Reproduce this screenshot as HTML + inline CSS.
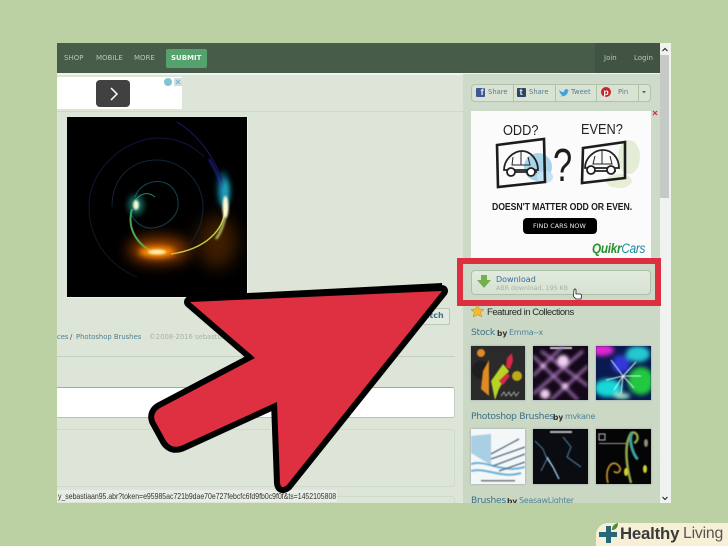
<!DOCTYPE html>
<html><head><meta charset="utf-8">
<style>
html,body{margin:0;padding:0}
body{width:728px;height:546px;overflow:hidden;position:relative;background:#bbd1a3;font-family:"Liberation Sans","DejaVu Sans",sans-serif}
div,span,a{position:absolute;white-space:nowrap}
.v{font-family:"DejaVu Sans",sans-serif}
.n{top:54px;font-size:7px;color:#b7c5b4;font-family:"DejaVu Sans",sans-serif}
.s{top:88px;font-size:6.8px;color:#557f8c;font-family:"DejaVu Sans",sans-serif}
.h{font-size:9.200px;letter-spacing:-.3px;color:#3d7088;font-family:"DejaVu Sans",sans-serif}
.b{font-size:7.5px;color:#333;font-weight:bold;font-family:"DejaVu Sans",sans-serif}
.u{font-size:8px;letter-spacing:-.3px;color:#4f8494;font-family:"DejaVu Sans",sans-serif}
.t{overflow:hidden;box-shadow:0 0 2px #99a;background:#000}
.t svg{filter:blur(.4px);display:block}
</style></head><body>
<div style="left:57px;top:43px;width:614px;height:460px;background:#dce5d7;overflow:hidden"></div>
<!-- nav -->
<div style="left:57px;top:43px;width:603px;height:30px;background:#475c49"></div>
<div style="left:595px;top:43px;width:65px;height:30px;background:#415443"></div>
<div style="left:57px;top:73px;width:603px;height:1.500px;background:#f0f4ee"></div>
<span class="n" style="left:64px">SHOP</span>
<span class="n" style="left:96px">MOBILE</span>
<span class="n" style="left:134px">MORE</span>
<div style="left:166px;top:49px;width:41px;height:19px;background:#55a26e;border-radius:2px"></div>
<span class="v" style="left:171px;top:54px;font-size:7px;font-weight:bold;color:#f2f7f0">SUBMIT</span>
<span class="n" style="left:604px">Join</span>
<span class="n" style="left:634px">Login</span>
<!-- top ad -->
<div style="left:57px;top:77px;width:125px;height:32px;background:#fff"></div>
<div style="left:96px;top:80px;width:34px;height:27px;background:#414141;border-radius:4px"></div>
<svg style="position:absolute;left:96px;top:80px" width="34" height="27"><path d="M15 8l6 6-6 6" fill="none" stroke="#fff" stroke-width="1.500"/></svg>
<div style="left:164px;top:78px;width:8px;height:8px;background:#7cc6d8;border-radius:4px"></div>
<div style="left:174px;top:78px;width:8px;height:8px;background:#cfdfe6"></div>
<svg style="position:absolute;left:174px;top:78px" width="8" height="8"><path d="M2 2l4 4M6 2L2 6" stroke="#6fb8cc" stroke-width="1"/></svg>
<div style="left:57px;top:111px;width:406px;height:1px;background:#cfd9ca"></div>
<!-- main image -->
<div style="left:67px;top:117px;width:181px;height:181px;background:#eef2ec"></div>
<svg style="position:absolute;left:67px;top:117px" width="180" height="180" viewBox="0 0 180 180">
<defs>
<filter id="b1" x="-100%" y="-100%" width="300%" height="300%"><feGaussianBlur stdDeviation="1"/></filter>
<filter id="b3" x="-100%" y="-100%" width="300%" height="300%"><feGaussianBlur stdDeviation="3"/></filter>
<filter id="b8" x="-100%" y="-100%" width="300%" height="300%"><feGaussianBlur stdDeviation="8"/></filter>
</defs>
<rect width="180" height="180" fill="#000"/>
<ellipse cx="150" cy="125" rx="20" ry="26" fill="#7a3a00" opacity=".5" filter="url(#b8)"/>
<ellipse cx="92" cy="133" rx="30" ry="11" fill="#c45200" opacity=".95" filter="url(#b8)"/>
<ellipse cx="156" cy="72" rx="6" ry="18" fill="#0f6f98" opacity=".7" filter="url(#b3)"/>
<g fill="none">
<path d="M110 5C135 20 155 50 159 82" stroke="#1c1660" stroke-width="1.100"/>
<path d="M142 42C150 55 157 72 159 85" stroke="#1c2890" stroke-width="2" filter="url(#b1)"/>
<path d="M22 90C22 50 60 21 92 21C112 21 128 30 137 40" stroke="#141440" stroke-width="1"/>
<path d="M22 90C22 125 45 150 70 160" stroke="#101a20" stroke-width="1"/>
<path d="M45 90C45 60 65 43 90 43C115 43 136 65 136 90C136 105 130 118 122 128" stroke="#102638" stroke-width="1"/>
<path d="M68 80C72 68 85 63 95 65C108 68 112 80 111 90C109 102 95 112 82 111C72 110 66 102 63 95" stroke="#124650" stroke-width="1"/>
<path d="M68 84C72 78 80 73 88 80" stroke="#2f7f6a" stroke-width="1"/>
<path d="M65 92C60 110 68 126 86 135" stroke="#4aa850" stroke-width="2"/>
<path d="M158 92C157 112 140 132 104 137" stroke="#c0ce50" stroke-width="1.500"/>
<path d="M159 88C159 100 156 112 149 122" stroke="#dfe87a" stroke-width="2" filter="url(#b1)"/>
</g>
<ellipse cx="90" cy="135" rx="18" ry="5.500" fill="#ff8f00" filter="url(#b3)"/>
<ellipse cx="90" cy="135" rx="9" ry="2.500" fill="#fff0b0" filter="url(#b1)"/>
<ellipse cx="158" cy="75" rx="4" ry="13" fill="#28c0d0" opacity=".9" filter="url(#b3)"/>
<ellipse cx="158.500" cy="90" rx="3" ry="11" fill="#fffbd8" filter="url(#b1)"/>
<ellipse cx="69" cy="88" rx="8" ry="10" fill="#1a9a8a" opacity=".65" filter="url(#b3)"/>
<ellipse cx="69" cy="88" rx="3" ry="5" fill="#f4ffd8" filter="url(#b1)"/>
</svg>
<!-- lower left -->
<span class="v" style="left:57px;top:333px;font-size:6.800px;color:#4f7f8f">ces</span>
<span class="v" style="left:70px;top:333px;font-size:6.800px;color:#444">/</span>
<span class="v" style="left:76px;top:333px;font-size:6.800px;color:#4f7f8f">Photoshop Brushes</span>
<span class="v" style="left:149px;top:333px;font-size:6.800px;color:#a9b4a6">©2008-2016 sebastiaan95</span>
<div style="left:400px;top:308px;width:48px;height:15px;border:1px solid #bcc8b8;border-radius:2px;background:#e2e9de"></div>
<span class="v" style="left:424px;top:311px;font-size:8px;font-weight:bold;color:#3d7088">atch</span>
<div style="left:57px;top:356px;width:398px;height:1px;background:#c4cfbf"></div>
<div style="left:57px;top:387px;width:397px;height:29px;background:#fff;border-top:1.500px solid #a0aa9d;border-bottom:1px solid #b9c3b5;border-right:1px solid #c5cdc2;border-radius:0 3px 3px 0"></div>
<div style="left:57px;top:429px;width:397px;height:56px;border:1px solid #d0dacb;border-left:0;border-radius:0 3px 3px 0"></div>
<div style="left:57px;top:496px;width:397px;height:7px;border:1px solid #d0dacb;border-left:0;border-bottom:0;border-radius:0 3px 0 0"></div>
<!-- sidebar -->
<div style="left:463px;top:74px;width:197px;height:429px;background:linear-gradient(180deg,#cfdbca 0,#c9d7c3 100%)"></div>
<div style="left:660px;top:43px;width:11px;height:460px;background:#f0f2ef"></div>
<div style="left:660px;top:55px;width:9px;height:143px;background:#c6cac6"></div>
<svg style="position:absolute;left:660px;top:43px" width="11" height="460"><path d="M2.500 8l2.500-2.500L7.500 8M2.500 454l2.500 2.500L7.500 454" fill="none" stroke="#222" stroke-width="1.100"/></svg>
<!-- share bar -->
<div style="left:471px;top:84px;width:178px;height:16px;border:1px solid #b2c0ac;border-radius:4px;background:#d9e3d4"></div>
<div style="left:513px;top:85px;width:1px;height:16px;background:#b2c0ac"></div>
<div style="left:555px;top:85px;width:1px;height:16px;background:#b2c0ac"></div>
<div style="left:596px;top:85px;width:1px;height:16px;background:#b2c0ac"></div>
<div style="left:638px;top:85px;width:1px;height:16px;background:#b2c0ac"></div>
<div style="left:476px;top:88px;width:9px;height:9px;background:#3b5998;border-radius:1px"></div>
<span style="left:480.500px;top:87px;font-size:9.500px;font-weight:bold;color:#dfe6f2">f</span>
<span class="s" style="left:488px">Share</span>
<div style="left:517px;top:88px;width:9px;height:9px;background:#2c4762;border-radius:1px"></div>
<span style="left:519.500px;top:87px;font-size:9.500px;font-weight:bold;color:#dfe6f2">t</span>
<span class="s" style="left:529px">Share</span>
<svg style="position:absolute;left:559px;top:88px" width="10" height="9"><path d="M0 2C2 4 4 4 5 4C5 1 8 0 9 2L10 2L9 3C9 7 5 9 1 8C3 8 3 7 4 7C2 7 1 5 1 5C1 4 0 3 0 2Z" fill="#3fa3dc"/></svg>
<span class="s" style="left:571px">Tweet</span>
<div style="left:601px;top:87px;width:10px;height:10px;border-radius:5px;background:#c8232c"></div>
<span style="left:603.500px;top:87px;font-size:8.500px;font-weight:bold;color:#fff">p</span>
<span class="s" style="left:618px">Pin</span>
<svg style="position:absolute;left:641px;top:90px" width="7" height="5"><path d="M1 1h4L3 3.500Z" fill="#667"/></svg>
<!-- ad -->
<div style="left:471px;top:111px;width:180px;height:150px;background:#fbfbfb"></div>
<svg style="position:absolute;left:652px;top:110px" width="7" height="7"><path d="M1 1l4 4M5 1l-4 4" stroke="#c8323c" stroke-width="1.200"/></svg>
<span style="left:503px;top:122px;font-size:15px;color:#222;transform:scaleX(.85);transform-origin:0 0">ODD?</span>
<span style="left:581px;top:121px;font-size:15px;color:#222;transform:scaleX(.85);transform-origin:0 0">EVEN?</span>
<svg style="position:absolute;left:495px;top:135px" width="150" height="60" viewBox="0 0 150 60">
<ellipse cx="43" cy="32" rx="14" ry="14" fill="#a8d4ea"/>
<ellipse cx="50" cy="42" rx="8" ry="6" fill="#c4e2f0"/>
<ellipse cx="134" cy="22" rx="11" ry="17" fill="#e3edd6"/>
<ellipse cx="124" cy="46" rx="13" ry="7" fill="#e7eed6"/>
<path d="M2 10L49 4L50 47L3 52Z" fill="none" stroke="#1c1c1c" stroke-width="2.600"/>
<path d="M88 13L130 7L130 43L87 48Z" fill="none" stroke="#1c1c1c" stroke-width="2.600"/>
<path d="M9 35C9 25 18 16 27 16C36 16 43 25 43 35Z M12 37H42" fill="none" stroke="#222" stroke-width="1.800"/>
<circle cx="16" cy="37" r="4" fill="#fff" stroke="#222" stroke-width="1.800"/><circle cx="36" cy="37" r="4" fill="#fff" stroke="#222" stroke-width="1.800"/>
<path d="M26 17v13M18 22l-1 8h18l-2-8" fill="none" stroke="#222" stroke-width="1"/>
<path d="M90 33C90 23 99 15 108 15C117 15 124 23 124 33Z M93 36H121" fill="none" stroke="#222" stroke-width="1.800"/>
<circle cx="96" cy="35" r="4" fill="#fff" stroke="#222" stroke-width="1.800"/><circle cx="116" cy="35" r="4" fill="#fff" stroke="#222" stroke-width="1.800"/>
<path d="M107 16v13M100 21l-2 8h19l-2-8" fill="none" stroke="#222" stroke-width="1"/>
</svg>
<span style="left:553px;top:138px;font-size:46px;color:#1c1c1c;transform:scaleX(.75);transform-origin:0 0">?</span>
<span style="left:492px;top:201px;font-size:10.500px;font-weight:bold;color:#1d1d1d;letter-spacing:-.1px;transform:scaleX(.83);transform-origin:0 0">DOESN'T MATTER ODD OR EVEN.</span>
<div style="left:523px;top:218px;width:74px;height:16px;background:#000;border-radius:4px"></div>
<span class="v" style="left:533px;top:222px;font-size:6.400px;color:#e8e8e8">FIND CARS NOW</span>
<span style="left:592px;top:241px;font-size:13.500px;font-weight:bold;font-style:italic;color:#26912f;letter-spacing:-.3px;transform:scaleX(.87);transform-origin:0 0">Quikr<span style="position:static;font-weight:normal;color:#1f8aa0">Cars</span></span>
<!-- red box -->
<div style="left:457px;top:258px;width:192px;height:36px;border:6px solid #dc2f40;background:#ccd9c7"></div>
<div style="left:471px;top:270px;width:178px;height:23px;border:1px solid #b0bfaa;border-radius:4px;background:linear-gradient(#e3ebdf,#d6e1d1)"></div>
<svg style="position:absolute;left:477px;top:275px" width="14" height="13"><path d="M4 0h6v5h4L7 13 0 5h4Z" fill="#74b04f"/></svg>
<span class="v" style="left:496px;top:275px;font-size:8px;color:#2f6da0">Download</span>
<span class="v" style="left:496px;top:285px;font-size:6.300px;color:#a9b3a5">ABR download, 195 KB</span>
<svg style="position:absolute;left:571px;top:288px" width="12" height="12"><path d="M3 1.500c1-1 2-.500 2 .500v4h4c1 0 1.500 1 1.500 2l-.500 3H5L2.500 8.500 3 1.500Z" fill="#fff" stroke="#222" stroke-width=".8"/></svg>
<!-- collections -->
<svg style="position:absolute;left:471px;top:305px" width="13" height="12"><path d="M6.500 0l2 4 4.500.5-3.300 3 1 4.500-4.200-2.300L2.300 12l1-4.500L0 4.500 4.500 4Z" fill="#f2bc30" stroke="#b3862a" stroke-width=".5"/></svg>
<span style="left:487px;top:307px;font-size:9.500px;color:#262a26;letter-spacing:-.45px">Featured in Collections</span>
<span class="h" style="left:471px;top:327px">Stock</span>
<span class="b" style="left:497px;top:329px">by</span>
<span class="u" style="left:509px;top:328px">Emma--x</span>
<div class="t" style="left:471px;top:346px;width:54px;height:54px;background:#2a2a2a">
<svg width="54" height="54"><circle cx="10" cy="7" r="4" fill="#e08a22"/><circle cx="10" cy="24" r="9" fill="#1e1e1e"/><path d="M12 25L18 14 18 50 10 43Z" fill="#e08a22"/><path d="M20 35L32 18 38 25 28 43 24 54Z" fill="#b7d323"/><path d="M36 12l5-5 1 8-3 8-4-2ZM28 35l8-8 3 3-7 9Z" fill="#d42a48"/><circle cx="46" cy="30" r="5" fill="#bfa818"/><path d="M30 50l3-4 2 4 3-4 2 4 3-4 2 4 3-4" stroke="#bbb" stroke-width=".8" fill="none"/></svg></div>
<div class="t" style="left:533px;top:346px;width:55px;height:54px;background:#14081a">
<svg width="55" height="54"><defs><filter id="p" x="-50%" y="-50%" width="200%" height="200%"><feGaussianBlur stdDeviation="1.600"/></filter></defs><rect x="17" y="1" width="22" height="2" fill="#ccc"/><g stroke="#b07cc0" stroke-width="2.500" filter="url(#p)"><path d="M0 30L30 0M0 48L50 5M18 54L55 20M0 10L45 54M8 5L55 40"/></g><g fill="#f0d0f5" filter="url(#p)"><circle cx="30" cy="15" r="6"/><circle cx="12" cy="48" r="5"/><circle cx="32" cy="40" r="3"/><circle cx="10" cy="20" r="2"/></g></svg></div>
<div class="t" style="left:596px;top:346px;width:55px;height:54px;background:#081a50">
<svg width="55" height="54"><defs><filter id="q" x="-50%" y="-50%" width="200%" height="200%"><feGaussianBlur stdDeviation="2"/></filter></defs><g filter="url(#q)"><ellipse cx="6" cy="4" rx="12" ry="6" fill="#e028d0"/><ellipse cx="42" cy="8" rx="12" ry="8" fill="#28c8d0"/><ellipse cx="45" cy="35" rx="13" ry="14" fill="#22c840"/><ellipse cx="12" cy="42" rx="14" ry="9" fill="#18d8d8"/><ellipse cx="25" cy="18" rx="9" ry="9" fill="#3038d8"/><ellipse cx="26" cy="50" rx="8" ry="3" fill="#a8f0d0"/></g><path d="M27 30L15 14M27 30L40 16M27 30L45 30M27 30L10 34M27 30L25 48M27 30L18 44M27 30L38 42" stroke="#d8f8f0" stroke-width="1"/></svg></div>
<span class="h" style="left:471px;top:411px">Photoshop Brushes</span>
<span class="b" style="left:553px;top:413px">by</span>
<span class="u" style="left:565px;top:412px">mvkane</span>
<div class="t" style="left:471px;top:429px;width:54px;height:55px;background:#f4f7f8">
<svg width="54" height="55"><path d="M0 7L20 5 20 36 0 24Z" fill="#a9cfe4"/><path d="M0 35C15 30 30 45 54 38M0 42C15 38 30 50 50 44" stroke="#6db0d5" stroke-width="2" fill="none"/><path d="M20 25L48 10M20 30L54 18M22 37L54 25M28 42L54 33" stroke="#55707f" stroke-width="1.300" fill="none"/><rect x="10" y="51" width="34" height="1.500" fill="#777"/></svg></div>
<div class="t" style="left:533px;top:429px;width:55px;height:55px;background:#0a0c12">
<svg width="55" height="55"><rect x="17" y="2" width="22" height="2" fill="#bbb"/><path d="M2 12L10 20 14 30 20 38 26 50M30 8L38 18 34 28 48 38M14 30L8 42" stroke="#4b7896" stroke-width="1.100" fill="none"/><path d="M14 28L20 38 26 50" stroke="#9fd0ea" stroke-width="1.300" fill="none"/></svg></div>
<div class="t" style="left:596px;top:429px;width:55px;height:55px;background:#050505">
<svg width="55" height="55"><path d="M35 54C30 35 28 15 35 4C42 1 44 12 38 14" stroke="#8fa846" stroke-width="2.500" fill="none"/><path d="M36 4C32 12 38 28 42 30" stroke="#3aa2a8" stroke-width="3" fill="none"/><path d="M12 54C8 40 16 30 22 36C28 42 20 46 18 42" stroke="#b88c2c" stroke-width="1.800" fill="none"/><ellipse cx="50" cy="14" rx="2" ry="4" fill="#8a8f7a"/><ellipse cx="49" cy="40" rx="2" ry="4" fill="#d8d030"/><ellipse cx="30" cy="43" rx="2" ry="4" fill="#d8d030"/><rect x="3" y="14" width="28" height="1" fill="#999"/><rect x="3" y="5" width="6" height="6" fill="none" stroke="#bbb"/></svg></div>
<span class="h" style="left:471px;top:495px">Brushes</span>
<span class="b" style="left:507px;top:497px">by</span>
<span class="u" style="left:519px;top:496px">SeasawLighter</span>
<!-- status bar -->
<div style="left:57px;top:490px;width:280px;height:12px;background:#e9ede7"></div>
<span style="left:58px;top:491px;font-size:8.400px;color:#333;transform:scaleX(.825);transform-origin:0 0">y_sebastiaan95.abr?token=e95985ac721b9dae70e727febcfc6fd9fb0c9f0f&amp;ts=1452105808</span>
<!-- arrow -->
<svg style="position:absolute;left:0;top:0" width="728" height="546">
<path d="M442 291L190 302L255 358L160 408Q152 413 155 421L166 441Q172 450 183 445L277 402L280 483Q281 490 287 485Z" fill="#000" stroke="#000" stroke-width="12" stroke-linejoin="round"/>
<path d="M442 283L190 296L190 302L442 291Z" fill="#000"/>
<path d="M442 291L190 302L255 358L160 408Q152 413 155 421L166 441Q172 450 183 445L277 402L280 483Q281 490 287 485Z" fill="#df3042"/>
</svg>
<!-- cover bottom -->
<div style="left:57px;top:503px;width:614px;height:10px;background:#bbd1a3"></div>
<!-- logo -->
<div style="left:596px;top:523px;width:132px;height:23px;background:#f7efd6;border-radius:12px 0 0 0"></div>
<svg style="position:absolute;left:596px;top:515px" width="26" height="31"><path d="M10 11h5v6h6v5h-6v6h-5v-6H3v-5h7Z" fill="#24687a"/><path d="M16 15C16 11 18 9 22 8C22 12 20 15 16 15Z" fill="#4e8c3a"/></svg>
<span style="left:620px;top:524px;font-size:16.800px;font-weight:bold;color:#3a3a3a;letter-spacing:-.2px">Healthy</span>
<span style="left:683px;top:525px;font-size:15.800px;color:#555;letter-spacing:-.2px">Living</span>
</body></html>
